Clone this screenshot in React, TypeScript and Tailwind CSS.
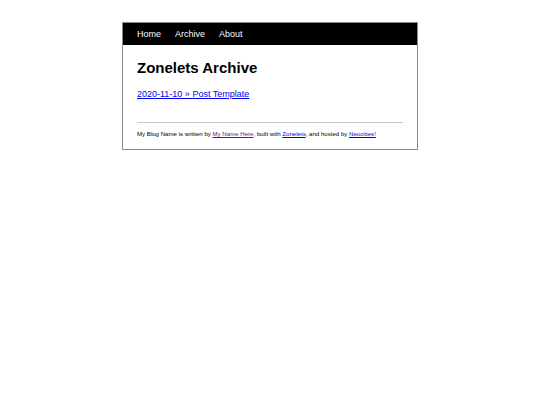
import React from "react";

const navLinks = ["Home", "Archive", "About"];

const App = () => {
  return (
    <div className="min-h-[405px] bg-white pt-[22px] font-['Liberation_Sans',Arial,sans-serif] text-black">
      <div className="mx-auto w-[296px] border border-[#8a8a8a]">
        {/* Barra de navegação */}
        <nav className="flex h-[22px] items-center gap-[14px] bg-black px-[14px] text-[9px] leading-[10px] text-white">
          {navLinks.map((link) => (
            <a key={link} href="#" className="text-white no-underline">
              {link}
            </a>
          ))}
        </nav>

        <main className="px-[14px] pt-[14px] pb-[12px]">
          <h1 className="text-[15px] leading-[17px] font-bold">Zonelets Archive</h1>
          <ul className="mt-[13px] text-[9px] leading-[10px]">
            <li>
              <a href="#" className="text-[#0000ee] underline">
                2020-11-10 » Post Template
              </a>
            </li>
          </ul>

          <hr className="mt-[23px] border-t border-[#c8c8c8]" />

          <footer className="mt-[7px] text-[6.1px] leading-[7px]">
            My Blog Name is written by{" "}
            <a href="#" className="text-[#551a8b] underline">
              My Name Here
            </a>
            , built with{" "}
            <a href="#" className="text-[#0000ee] underline">
              Zonelets
            </a>
            , and hosted by{" "}
            <a href="#" className="text-[#0000ee] underline">
              Neocities!
            </a>
          </footer>
        </main>
      </div>
    </div>
  );
};

export default App;
